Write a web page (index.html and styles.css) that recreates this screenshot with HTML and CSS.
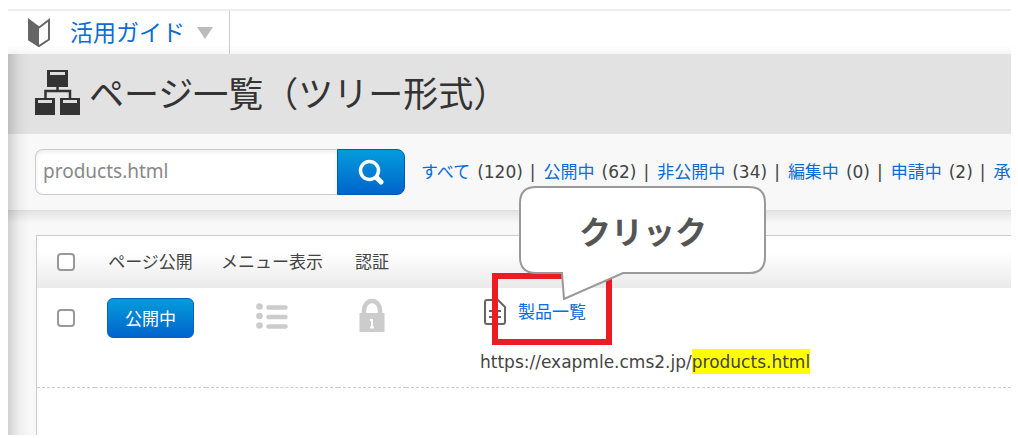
FILE: index.html
```html
<!DOCTYPE html>
<html lang="ja">
<head>
    <meta charset="UTF-8">
    <meta name="viewport" content="width=device-width, initial-scale=1.0">
    <title>ページ一覧（ツリー形式）</title>
    <link rel="stylesheet" href="styles.css">
</head>
<body>
    <div class="page">
        <nav class="topbar">
            <a href="#" class="guide">
                <svg class="guide-icon" width="24" height="30" viewBox="0 0 24 30">
                    <path d="M1 1L12 9V29L1 22Z" fill="#666"/>
                    <path d="M2 2L12 9.500L22 2V21.500L12 28L2 21.500Z" fill="none" stroke="#666" stroke-width="2"/>
                </svg>
                <span>活用ガイド</span>
                <span class="caret"></span>
            </a>
        </nav>

        <main class="main">
            <header class="title">
                <svg width="45" height="45" viewBox="0 0 45 45">
                    <g fill="#333">
                        <rect x="12" y="0" width="21" height="17"/>
                        <rect x="0" y="28" width="20" height="17"/>
                        <rect x="25" y="28" width="20" height="17"/>
                    </g>
                    <path d="M22.500 16V21M10.500 28V21H35V28" fill="none" stroke="#333" stroke-width="2.500"/>
                    <path d="M15 3.500H30M3 31.500H17M28 31.500H42" stroke="#ddd" stroke-width="3"/>
                </svg>
                <h1>ページ一覧（ツリー形式）</h1>
            </header>

            <div class="tools">
                <form class="search">
                    <input type="text" value="products.html" aria-label="ページ検索">
                    <button type="button" aria-label="検索">
                        <svg width="26" height="26" viewBox="0 0 26 26" fill="none" stroke="#fff" stroke-linecap="round">
                            <circle cx="11.500" cy="11.500" r="9" stroke-width="3.500"/>
                            <path d="M18.500 18.500L23 23" stroke-width="5"/>
                        </svg>
                    </button>
                </form>
                <ul class="filters">
                    <li><a href="#">すべて</a><span>(120)</span><span>|</span></li>
                    <li><a href="#">公開中</a><span>(62)</span><span>|</span></li>
                    <li><a href="#">非公開中</a><span>(34)</span><span>|</span></li>
                    <li><a href="#">編集中</a><span>(0)</span><span>|</span></li>
                    <li><a href="#">申請中</a><span>(2)</span><span>|</span></li>
                    <li><a href="#">承</a></li>
                </ul>
            </div>

            <div class="list">
                <table>
                    <thead>
                        <tr>
                            <th class="col-check"><input type="checkbox" aria-label="すべて選択"></th>
                            <th class="col-public">ページ公開</th>
                            <th class="col-menu">メニュー表示</th>
                            <th class="col-auth">認証</th>
                            <th class="col-name"></th>
                        </tr>
                    </thead>
                    <tbody>
                        <tr>
                            <td><input type="checkbox" aria-label="製品一覧を選択"></td>
                            <td><button type="button" class="status">公開中</button></td>
                            <td>
                                <svg class="state-icon" width="32" height="34" viewBox="0 0 32 34" fill="#ccc" stroke="#ccc">
                                    <path d="M12.500 9.500H29.500M12.500 19H29.500M12.500 28.500H29.500" stroke-width="4.500" stroke-linecap="round"/>
                                    <g stroke="none">
                                        <circle cx="3.500" cy="8.500" r="3.300"/>
                                        <circle cx="3.500" cy="18" r="3.300"/>
                                        <circle cx="3.500" cy="27.500" r="3.300"/>
                                    </g>
                                </svg>
                            </td>
                            <td>
                                <svg class="state-icon" width="26" height="34" viewBox="0 0 26 34">
                                    <rect x="0.500" y="15" width="25" height="19" fill="#ccc"/>
                                    <path d="M5 16V12A8 9 0 0 1 21 12V16" fill="none" stroke="#ccc" stroke-width="4.500"/>
                                    <path d="M11 22H13V29M11 29.500H15" fill="none" stroke="#fff" stroke-width="2"/>
                                </svg>
                            </td>
                            <td class="name">
                                <div class="name-link">
                                    <svg width="22" height="26" viewBox="0 0 22 26" fill="none" stroke="#666" stroke-width="2">
                                        <path d="M3 1H14L21 8V23Q21 25 19 25H3Q1 25 1 23V3Q1 1 3 1Z"/>
                                        <path d="M5 12H17M5 18H17"/>
                                    </svg>
                                    <a href="#">製品一覧</a>
                                    <div class="marker"></div>
                                    <div class="callout">
                                        <svg width="248" height="116" viewBox="0 0 248 116">
                                            <path d="M17 1H230Q246 1 246 17V71Q246 87 230 87H104L45 113L43 87H17Q1 87 1 71V17Q1 1 17 1Z" fill="#fff" stroke="#999" stroke-width="2"/>
                                        </svg>
                                        <strong>クリック</strong>
                                    </div>
                                </div>
                                <p class="url">https://exapmle.cms2.jp/<mark>products.html</mark></p>
                            </td>
                        </tr>
                    </tbody>
                </table>
            </div>
        </main>
    </div>
</body>
</html>
```

FILE: styles.css
```css
* {
    box-sizing: border-box;
}
body {
    margin: 0;
    background: #fff;
    color: #444;
    font-family: "DejaVu Sans", "Noto Sans CJK JP", sans-serif;
    font-size: 17px;
    line-height: 24px;
}
a {
    color: #0a6cd6;
    text-decoration: none;
}
svg {
    display: block;
    flex: none;
}
.page {
    display: flex;
    flex-direction: column;
    min-height: 100vh;
    padding: 9px 7px 3px 8px;
}
.topbar {
    display: flex;
    height: 45px;
    border-top: 2px solid #eee;
    background: linear-gradient(#fff 80%, #f5f5f5);
}
.guide {
    display: flex;
    align-items: center;
    padding: 0 16px 4px 19px;
    border-right: 1px solid #ccc;
    font-family: "Noto Sans CJK JP", sans-serif;
    font-size: 23px;
}
.guide-icon {
    margin: 4px 19px 0 0;
}
.caret {
    margin: 4px 0 0 12px;
    border: 8px solid transparent;
    border-top: 12px solid #bbb;
    border-bottom: 0;
}
.main {
    position: relative;
    display: flex;
    flex: 1;
    flex-direction: column;
    background: #f8f8f8;
}
/* inner shadow along the left edge */
.main::before {
    content: "";
    position: absolute;
    top: 0;
    bottom: 0;
    left: 0;
    width: 22px;
    background: linear-gradient(to right, rgba(0,0,0,0.16), rgba(0,0,0,0.04) 50%, rgba(0,0,0,0));
}
.title {
    display: flex;
    align-items: center;
    gap: 9px;
    height: 80px;
    padding: 0 27px 4px;
    background: #e2e2e2;
}
h1 {
    margin: 0;
    color: #333;
    font-family: "Noto Sans CJK JP", sans-serif;
    font-size: 35px;
    font-weight: 400;
    line-height: 44px;
    white-space: nowrap;
}
.tools {
    display: flex;
    align-items: center;
    gap: 16px;
    height: 77px;
    padding-left: 27px;
    border-bottom: 1px solid #ddd;
    overflow: hidden;
}
.search {
    display: flex;
    flex: none;
    height: 46px;
}
.search input {
    width: 302px;
    padding: 0 7px 2px;
    border: 1px solid #ccc;
    border-right: 0;
    border-radius: 8px 0 0 8px;
    background: #fff;
    box-shadow: inset 0 2px 4px rgba(0,0,0,0.08);
    color: #888;
    font-family: "Noto Sans", sans-serif;
    font-size: 19px;
}
.search button {
    display: flex;
    align-items: center;
    justify-content: center;
    width: 68px;
    padding: 0;
    border: 1px solid #0058b0;
    border-radius: 0 8px 8px 0;
    background: linear-gradient(#049cdb, #0064cd);
}
.filters {
    display: flex;
    gap: 8px;
    margin: 0;
    padding: 0;
    list-style: none;
    white-space: nowrap;
}
.filters li {
    display: flex;
    gap: 7px;
}
.list {
    flex: 1;
    padding: 24px 0 0 28px;
    background: linear-gradient(#e4e4e4, #f8f8f8 12px);
    display: flex;
}
table {
    width: 100%;
    border-collapse: separate;
    border-spacing: 0;
    table-layout: fixed;
    border: 1px solid #ccc;
    border-width: 1px 0 0 1px;
    background: #fff;
}
/* leaves room under the last row */
table::after {
    content: "";
    display: table-footer-group;
    height: 100%;
}
th, td {
    padding: 0;
    text-align: center;
    vertical-align: top;
}
th {
    height: 52px;
    background: linear-gradient(#fff 30%, #eaeaea);
    font-weight: normal;
    vertical-align: middle;
}
td {
    height: 100px;
    padding-top: 10px;
    border-bottom: 1px dashed #ccc;
}
.col-check {
    width: 58px;
}
.col-public {
    width: 111px;
}
.col-menu {
    width: 132px;
}
.col-auth {
    width: 68px;
}
input[type="checkbox"] {
    appearance: none;
    display: block;
    width: 18px;
    height: 18px;
    margin: 0 auto;
    border: 2px solid #999;
    border-radius: 4px;
    background: #fff;
}
td input[type="checkbox"] {
    margin-top: 11px;
}
.status {
    width: 87px;
    height: 40px;
    padding: 0 0 2px;
    border: 1px solid #0064b8;
    border-radius: 6px;
    background: linear-gradient(#049cdb, #0064cd);
    color: #fff;
    font-family: "Noto Sans CJK JP", sans-serif;
    font-size: 17px;
}
.state-icon {
    margin: 0 auto;
}
td.name {
    padding-left: 74px;
    text-align: left;
}
.name-link {
    position: relative;
    display: flex;
    align-items: center;
    gap: 12px;
    height: 28px;
    padding-left: 4px;
}
.marker {
    position: absolute;
    top: -25px;
    left: 12px;
    width: 120px;
    height: 72px;
    border: 6px solid #ed1c24;
}
.callout {
    position: absolute;
    top: -112px;
    left: 39px;
}
.callout strong {
    position: absolute;
    top: 24px;
    left: 0;
    width: 100%;
    color: #555;
    font-family: "Noto Sans CJK JP", sans-serif;
    font-size: 32px;
    line-height: 40px;
    text-align: center;
}
.url {
    margin: 24px 0 0;
}
mark {
    padding: 3px 0 2px;
    background: #ff0;
    color: inherit;
}
```
